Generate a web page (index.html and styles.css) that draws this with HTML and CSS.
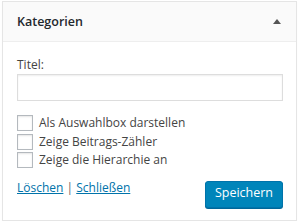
FILE: index.html
```html
<!DOCTYPE html>
<html lang="de">
  <head>
    <meta charset="UTF-8" />
    <meta name="viewport" content="width=device-width, initial-scale=1.0" />
    <title>Kategorien</title>
    <link rel="stylesheet" href="styles.css">
  </head>
  <body>
    <div class="widget">
      <div class="widget-top">
        <h3 class="widget-title">Kategorien</h3>
        <span class="toggle-arrow"></span>
      </div>

      <div class="widget-inside">
        <p class="field">
          <label for="title">Titel:</label>
          <input type="text" id="title" class="widefat" />
        </p>

        <p class="checks">
          <label class="check"><input type="checkbox" /> Als Auswahlbox darstellen</label>
          <label class="check"><input type="checkbox" /> Zeige Beitrags-Zähler</label>
          <label class="check"><input type="checkbox" /> Zeige die Hierarchie an</label>
        </p>

        <div class="widget-actions">
          <div class="links">
            <a href="#">Löschen</a> | <a href="#">Schließen</a>
          </div>
          <button class="button-primary">Speichern</button>
        </div>
      </div>
    </div>
  </body>
</html>
```

FILE: styles.css
```css
body {
  margin: 0;
  padding-top: 1px;
  font-family: "Open Sans", "Liberation Sans", sans-serif;
  font-size: 12px;
  line-height: 18px;
  color: #444;
  background-color: #fff;
}

.widget {
  width: 295px;
  margin-left: 2px;
  box-sizing: border-box;
  border: 1px solid #e5e5e5;
  background-color: #fff;
  box-shadow: 0 1px 1px rgba(0, 0, 0, 0.04);
}

.widget-top {
  display: flex;
  align-items: center;
  justify-content: space-between;
  height: 39px;
  padding: 0 14px;
  background-color: #fafafa;
  border-bottom: 1px solid #eee;
}

.widget-title {
  margin: 0;
  font-size: 12.5px;
  font-weight: 600;
  color: #23282d;
}

.toggle-arrow {
  width: 0;
  height: 0;
  margin-right: 1px;
  border-left: 4px solid transparent;
  border-right: 4px solid transparent;
  border-bottom: 5px solid #555;
}

.widget-inside {
  padding: 14px 13px 12px 14px;
}

.field {
  margin: 0;
}

.field label {
  display: block;
}

.widefat {
  display: block;
  width: 100%;
  height: 27px;
  margin: 0;
  box-sizing: border-box;
  border: 1px solid #ddd;
  box-shadow: inset 0 1px 2px rgba(0, 0, 0, 0.07);
  font: inherit;
  padding: 3px 5px;
}

.checks {
  display: flex;
  flex-direction: column;
  margin: 13px 0 0;
}

.check {
  display: flex;
  align-items: center;
  height: 18.5px;
}

.check input {
  appearance: none;
  width: 16px;
  height: 16px;
  margin: 0 6px 0 0;
  border: 1px solid #b4b9be;
  background: #fff;
  box-shadow: inset 0 1px 2px rgba(0, 0, 0, 0.1);
}

.widget-actions {
  display: flex;
  justify-content: space-between;
  align-items: flex-start;
  margin-top: 9px;
}

.links {
  color: #666;
}

.links a {
  color: #0073aa;
}

.button-primary {
  height: 27px;
  margin-top: 2px;
  padding: 0 9px 1px;
  font: inherit;
  font-size: 12.5px;
  line-height: 1;
  color: #fff;
  background-color: #0085ba;
  border: 1px solid #0073aa;
  border-radius: 3px;
  box-shadow: 0 1px 0 #006799;
  cursor: pointer;
}
```
